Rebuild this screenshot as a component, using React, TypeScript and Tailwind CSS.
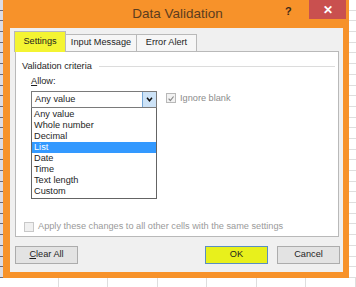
import React from "react";

const font = { fontFamily: '"Liberation Sans", Arial, sans-serif' };

function Check({ className }: { className?: string }) {
  return (
    <svg viewBox="0 0 10 10" className={className}>
      <path d="M2 5.2 L4.2 7.5 L8.2 2.5" fill="none" stroke="#8a8a8a" strokeWidth="1.5" />
    </svg>
  );
}

export default function App() {
  const items = ["Any value", "Whole number", "Decimal", "List", "Date", "Time", "Text length", "Custom"];
  return (
    <div className="w-[356px] h-[287px] bg-white overflow-hidden flex flex-col text-[9.2px] text-[#1e1e1e]" style={font}>
      <div className="flex h-[278px]">
        {/* left spreadsheet sliver */}
        <div className="w-[3px] bg-[#dcdce4] flex flex-col">
          {Array.from({ length: 26 }).map((_, i) => (
            <div key={i} className="h-[11px] border-b border-[#6a6a7a]" />
          ))}
        </div>
        {/* dialog */}
        <div className="w-[346px] bg-[#f7922a] flex flex-col pl-[7px] pr-[6px] pb-[6px]">
          {/* title bar */}
          <div className="h-[28px] flex items-start">
            <div className="flex-1 h-[28px] flex items-center justify-center text-[13.5px] text-[#5c3d1e] pl-[60px]">
              Data Validation
            </div>
            <div className="w-[14px] pt-[3px] text-[11px] font-bold text-[#3a2a1a] mr-[10px]">?</div>
            <div className="w-[37px] h-[19px] bg-[#c9504f] flex items-center justify-center text-white text-[12px] font-bold mr-[-3px]">
              ✕
            </div>
          </div>
          {/* panel */}
          <div className="flex-1 bg-[#f0f0f0] flex flex-col pl-[5px] pr-[4px] pt-[3px]">
            {/* tabs */}
            <div className="flex items-end h-[21px] ml-[-1px] relative z-10">
              <div className="h-[21px] w-[52px] bg-[#f4f432] border border-b-0 border-[#b9b9b9] flex items-center justify-center">
                Settings
              </div>
              <div className="h-[18px] w-[71px] bg-[#f6f6f6] border border-l-0 border-[#b9b9b9] flex items-center justify-center">
                Input Message
              </div>
              <div className="h-[18px] w-[60px] bg-[#f6f6f6] border border-l-0 border-[#b9b9b9] flex items-center justify-center">
                Error Alert
              </div>
            </div>
            {/* content */}
            <div className="h-[186px] bg-white border border-[#b9b9b9] mt-[-1px] flex flex-col pl-[6px] pr-[3px] pt-[8px]">
              <div className="flex items-center h-[13px]">
                <span>Validation criteria</span>
                <div className="flex-1 ml-[7px] border-t border-[#dcdcdc]" />
              </div>
              <div className="pl-[9px] mt-[2px] h-[13px] flex items-center">
                <span><span className="underline">A</span>llow:</span>
              </div>
              <div className="flex pl-[9px] mt-[3px]">
                <div className="flex flex-col w-[126px]">
                  <div className="h-[17px] border border-[#7a7a7a] flex items-center pl-[3px]">
                    <span className="flex-1">Any value</span>
                    <div className="w-[14px] h-[15px] bg-[#cde3f7] border-l border-[#74a6d6] flex items-center justify-center">
                      <svg viewBox="0 0 8 6" className="w-[7px] h-[5px]">
                        <path d="M1 1 L4 4.5 L7 1" fill="none" stroke="#111" strokeWidth="1.8" />
                      </svg>
                    </div>
                  </div>
                  <div className="h-[91px] border border-t-0 border-[#646464] flex flex-col pt-[1px]">
                    {items.map((it) => (
                      <div
                        key={it}
                        className={
                          "h-[11px] leading-[11px] pl-[2px] " +
                          (it === "List" ? "bg-[#3399ff] text-white" : "")
                        }
                      >
                        {it}
                      </div>
                    ))}
                  </div>
                </div>
                <div className="flex items-start ml-[9px] mt-[2px]">
                  <div className="w-[10px] h-[10px] border border-[#b8b8b8] bg-[#f2f2f2] flex items-center justify-center">
                    <Check className="w-[9px] h-[9px]" />
                  </div>
                  <span className="ml-[4px] text-[#8c8c8c] leading-[10px]">Ignore blank</span>
                </div>
              </div>
              <div className="flex items-center mt-[21px] pl-[2px]">
                <div className="w-[10px] h-[10px] border border-[#c8c8c8] bg-[#f0f0f0]" />
                <span className="ml-[4px] text-[#9a9a9a]">Apply these changes to all other cells with the same settings</span>
              </div>
            </div>
            {/* buttons */}
            <div className="flex items-center mt-[9px] h-[18px]">
              <div className="w-[63px] h-[18px] bg-[#e3e3e3] border border-[#acacac] flex items-center justify-center">
                <span><span className="underline">C</span>lear All</span>
              </div>
              <div className="flex-1" />
              <div className="w-[63px] h-[18px] bg-[#e8f01c] border border-[#5a8fc2] flex items-center justify-center">
                OK
              </div>
              <div className="w-[63px] h-[18px] bg-[#e3e3e3] border border-[#acacac] flex items-center justify-center ml-[9px] mr-[-1px]">
                Cancel
              </div>
            </div>
          </div>
        </div>
        {/* right spreadsheet sliver */}
        <div className="flex-1 bg-white flex flex-col">
          {Array.from({ length: 26 }).map((_, i) => (
            <div key={i} className="h-[11px] border-b border-[#dedede]" />
          ))}
        </div>
      </div>
      {/* bottom spreadsheet strip */}
      <div className="flex-1 flex bg-white">
        {Array.from({ length: 7 }).map((_, i) => (
          <div key={i} className={"h-full border-r border-[#dedede] " + (i === 0 ? "w-[65px]" : "w-[55px]")} />
        ))}
      </div>
    </div>
  );
}
